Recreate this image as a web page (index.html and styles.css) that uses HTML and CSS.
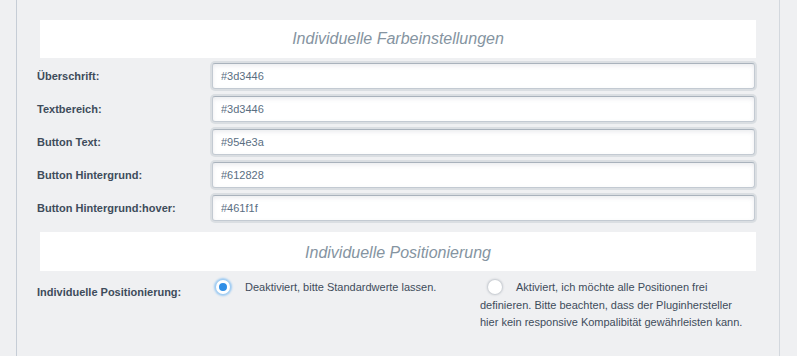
FILE: index.html
```html
<!DOCTYPE html>
<html lang="de">
<head>
    <meta charset="UTF-8">
    <title>Farbeinstellungen</title>
    <link rel="stylesheet" href="styles.css">
</head>
<body>
    <div class="panel">
        <div class="section-title">Individuelle Farbeinstellungen</div>

        <div class="row">
            <label class="row-label">Überschrift:</label>
            <input class="field" type="text" value="#3d3446">
        </div>
        <div class="row">
            <label class="row-label">Textbereich:</label>
            <input class="field" type="text" value="#3d3446">
        </div>
        <div class="row">
            <label class="row-label">Button Text:</label>
            <input class="field" type="text" value="#954e3a">
        </div>
        <div class="row">
            <label class="row-label">Button Hintergrund:</label>
            <input class="field" type="text" value="#612828">
        </div>
        <div class="row">
            <label class="row-label">Button Hintergrund:hover:</label>
            <input class="field" type="text" value="#461f1f">
        </div>

        <div class="section-title second">Individuelle Positionierung</div>

        <div class="row radio-row">
            <label class="row-label">Individuelle Positionierung:</label>
            <div class="options">
                <div class="option first">
                    <span class="radio checked"></span>Deaktiviert, bitte Standardwerte lassen.
                </div>
                <div class="option">
                    <span class="radio"></span>Aktiviert, ich möchte alle Positionen frei definieren. Bitte beachten, dass der Pluginhersteller hier kein responsive Kompalibität gewährleisten kann.
                </div>
            </div>
        </div>
    </div>
</body>
</html>
```

FILE: styles.css
```css
body {
    margin: 0;
    background-color: #eff0f2;
    font-family: "Liberation Sans", Arial, sans-serif;
}
.panel {
    margin-left: 16px;
    width: 764px;
    height: 356px;
    box-sizing: border-box;
    border-left: 1px solid #c6cdd6;
    border-right: 1px solid #d3d8de;
    padding: 20px 23px 0 23px;
}
.section-title {
    background-color: white;
    height: 38px;
    line-height: 38px;
    text-align: center;
    font-size: 16px;
    font-style: italic;
    color: #8594a1;
    margin-bottom: 5px;
}
.section-title.second {
    height: 39px;
    line-height: 42px;
    margin-top: 11px;
    margin-bottom: 0;
}
.row {
    display: flex;
    align-items: center;
    margin-left: -3px;
    margin-bottom: 7px;
}
.row-label {
    width: 175px;
    font-size: 11px;
    font-weight: bold;
    color: #3e4c5b;
}
.field {
    flex: 1;
    height: 26px;
    margin: 0 1px 0 0;
    box-sizing: border-box;
    border: 1px solid #c3cad2;
    border-top-color: #a9b2bc;
    border-radius: 3px;
    box-shadow: 0 0 0 2px #dadee2, inset 0 2px 4px rgba(120, 130, 145, 0.15);
    padding: 0 8px;
    font-family: "Liberation Sans", Arial, sans-serif;
    font-size: 11px;
    color: #5a6e82;
    background-color: white;
}
.radio-row {
    align-items: flex-start;
    margin-top: 8px;
}
.radio-row .row-label {
    padding-top: 7px;
}
.options {
    display: flex;
    font-size: 11px;
    line-height: 17.5px;
    color: #3e4c5b;
}
.option {
    width: 272px;
}
.option.first {
    width: 268px;
}
.radio {
    display: inline-block;
    width: 14px;
    height: 14px;
    border-radius: 50%;
    background-color: white;
    box-shadow: 0 0 2px 1px rgba(110, 120, 135, 0.35);
    vertical-align: -3px;
    margin: 0 14px 0 8px;
    box-sizing: border-box;
}
.radio.checked {
    border: 3px solid white;
    background-color: #2f8ee6;
    box-shadow: 0 0 2px 2px #9ccaf2;
    margin: 0 15px 0 4px;
}
```
